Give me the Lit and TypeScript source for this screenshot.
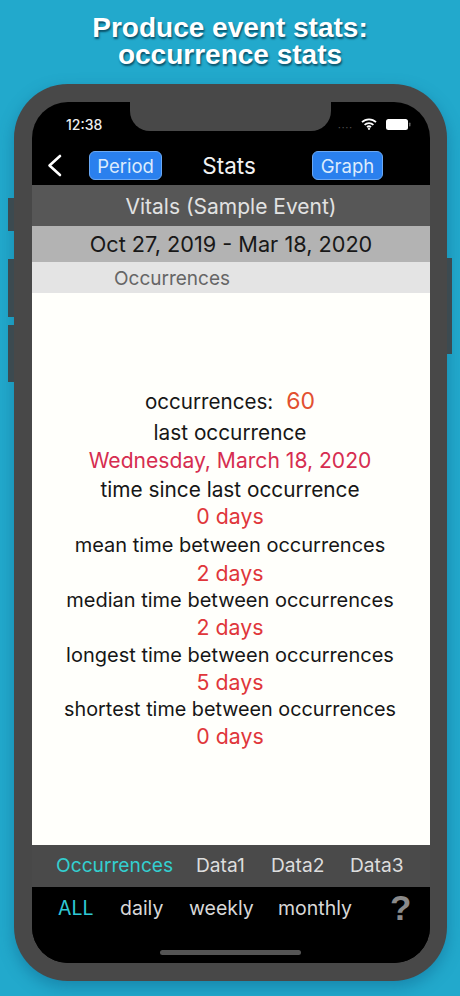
import { LitElement, html, css } from "lit";
import { customElement } from "lit/decorators.js";

const rows: [string, string, string][] = [
  ["last occurrence", "Wednesday, March 18, 2020", "big"],
  ["time since last occurrence", "0 days", "big"],
  ["mean time between occurrences", "2 days", "gap"],
  ["median time between occurrences", "2 days", ""],
  ["longest time between occurrences", "5 days", ""],
  ["shortest time between occurrences", "0 days", "small"],
];

@customElement("app-root")
export class AppRoot extends LitElement {
  static styles = css`
    :host { display: block; width: 460px; height: 996px; overflow: hidden; background: #22a9cc; font-family: Inter, "Liberation Sans", sans-serif; }
    .title { margin: 0; padding-top: 14px; height: 84px; box-sizing: border-box; text-align: center; color: #fff; font: bold 28px/27px "Liberation Sans", Arial, sans-serif; text-shadow: 1px 2px 2px rgba(0,50,70,.75); }
    .phone { position: relative; width: 433px; height: 897px; margin-left: 14px; box-sizing: border-box; padding: 18px 17px 18px 18px; border-radius: 54px; background: #484848; box-shadow: 0 6px 16px rgba(10,90,130,.45); }
    .btn { position: absolute; background: #3c4a50; width: 6px; }
    .b1 { left: -6px; top: 114px; height: 33px; }
    .b2 { left: -6px; top: 175px; height: 58px; }
    .b3 { left: -6px; top: 241px; height: 57px; }
    .b4 { right: -5px; top: 174px; height: 96px; width: 5px; }
    .screen { position: relative; height: 861px; border-radius: 36px; overflow: hidden; background: #000; display: flex; flex-direction: column; }
    .notch { position: absolute; left: 98px; top: 0; width: 201px; height: 29px; background: #484848; border-radius: 0 0 20px 20px; }
    .status { height: 49px; flex: none; display: flex; align-items: center; padding: 2px 19px 6px 34px; box-sizing: border-box; color: #eee; font-size: 14px; font-weight: 500; }
    .status .time { flex: 1; }
    .status svg { display: block; }
    .dots { color: #555; font-size: 9px; letter-spacing: 1px; margin: 5px 8px 0 0; line-height: 1; }
    .status .wifi { margin-right: 9px; margin-top: -2px; }
    .nav { height: 34px; flex: none; display: flex; align-items: flex-start; color: #fff; }
    .nav .back { margin: 3px 0 0 15px; width: 42px; }
    .pill { box-sizing: border-box; height: 29px; border-radius: 6px; background: #2a80ee; border: 1px solid #6aa8f4; color: #dcebfc; font-size: 18.5px; display: flex; align-items: center; justify-content: center; }
    .period { width: 73px; }
    .graph { width: 71px; }
    .nav .name { width: 134px; padding-right: 16px; text-align: center; font-size: 22.5px; line-height: 29px; color: #f2f2f2; }
    .vitals { height: 41px; flex: none; box-sizing: border-box; padding-top: 2px; background: #575757; color: #e2e2e2; font-size: 21px; display: flex; align-items: center; justify-content: center; }
    .range { height: 36px; flex: none; background: #b3b3b3; color: #181818; font-size: 21.7px; display: flex; align-items: center; justify-content: center; }
    .sect { height: 31px; flex: none; background: #e4e4e4; color: #666; font-size: 19px; display: flex; align-items: center; padding: 2px 0 0 82px; box-sizing: border-box; }
    .content { flex: none; height: 552px; box-sizing: border-box; background: #fffffb; padding: 95px 2px 0 0; text-align: center; font-size: 20px; line-height: 27.3px; color: #161616; }
    .first { display: flex; justify-content: center; align-items: baseline; gap: 13px; height: 27.3px; margin-bottom: 3px; font-size: 20.6px; }
    .num { color: #e2502f; font-size: 23px; }
    .big { font-size: 20.8px; }
    .small { font-size: 19.8px; }
    .gap { margin-top: 2px; }
    .val { color: #e0363a; font-size: 21.3px; }
    .val.date { color: #d62d50; font-size: 21.1px; line-height: 28.5px; }
    .label1 { line-height: 29px; }
    .tabs { height: 42px; flex: none; box-sizing: border-box; background: #4a4a4a; display: flex; align-items: center; color: #ddd; font-size: 19.2px; padding: 0 0 2px 24px; }
    .tabs span:nth-child(1) { width: 140px; color: #33cfd0; }
    .tabs span:nth-child(2) { width: 75px; }
    .tabs span:nth-child(3) { width: 79px; }
    .bottom { flex: 1; position: relative; background: #000; color: #d8d8d8; font-size: 19.5px; }
    .modes { height: 41px; display: flex; align-items: center; padding-left: 26px; }
    .modes span:nth-child(1) { width: 62px; color: #2fc8d6; }
    .modes span:nth-child(2) { width: 69px; }
    .modes span:nth-child(3) { width: 89px; }
    .modes span:nth-child(4) { width: 112px; }
    .q { color: #8a8a8a; font: bold 35px/1 "Liberation Sans", sans-serif; }
    .home { position: absolute; left: 128px; top: 63px; width: 141px; height: 5px; border-radius: 3px; background: #555; }
  `;

  render() {
    return html`
      <h1 class="title">Produce event stats:<br />occurrence stats</h1>
      <div class="phone">
        <i class="btn b1"></i><i class="btn b2"></i><i class="btn b3"></i><i class="btn b4"></i>
        <div class="screen">
          <div class="notch"></div>
          <div class="status">
            <span class="time">12:38</span>
            <span class="dots">····</span>
            <svg class="wifi" width="16" height="12" viewBox="0 0 16 12" fill="none" stroke="#fff" stroke-width="1.8">
              <path d="M1 4.2a10 10 0 0 1 14 0" />
              <path d="M3.6 6.9a6.4 6.4 0 0 1 8.8 0" />
              <path d="M6 9.2a3 3 0 0 1 4 0" />
              <circle cx="8" cy="10.8" r=".7" fill="#fff" stroke-width="1" />
            </svg>
            <svg class="batt" width="25" height="11" viewBox="0 0 25 11">
              <rect x="0" y="0" width="22" height="11" rx="2.5" fill="#fff" />
              <rect x="23" y="3.5" width="1.5" height="4" rx=".7" fill="#666" />
            </svg>
          </div>
          <div class="nav">
            <span class="back">
              <svg width="15" height="23" viewBox="0 0 15 23" fill="none" stroke="#fff" stroke-width="2.6" stroke-linecap="round" stroke-linejoin="round" style="display:block">
                <path d="M13 2 2.5 11.5 13 21" />
              </svg>
            </span>
            <span class="pill period">Period</span>
            <span class="name">Stats</span>
            <span class="pill graph">Graph</span>
          </div>
          <div class="vitals">Vitals (Sample Event)</div>
          <div class="range">Oct 27, 2019 - Mar 18, 2020</div>
          <div class="sect">Occurrences</div>
          <div class="content">
            <div class="first"><span>occurrences:</span><span class="num">60</span></div>
            ${rows.map(
              ([l, v, s], i) => html`<div class="${s} ${i === 0 ? "label1" : ""}">${l}</div>
                <div class="val ${i === 0 ? "date" : ""}">${v}</div>`
            )}
          </div>
          <div class="tabs"><span>Occurrences</span><span>Data1</span><span>Data2</span><span>Data3</span></div>
          <div class="bottom">
            <div class="modes"><span>ALL</span><span>daily</span><span>weekly</span><span>monthly</span><span class="q">?</span></div>
            <div class="home"></div>
          </div>
        </div>
      </div>
    `;
  }
}
